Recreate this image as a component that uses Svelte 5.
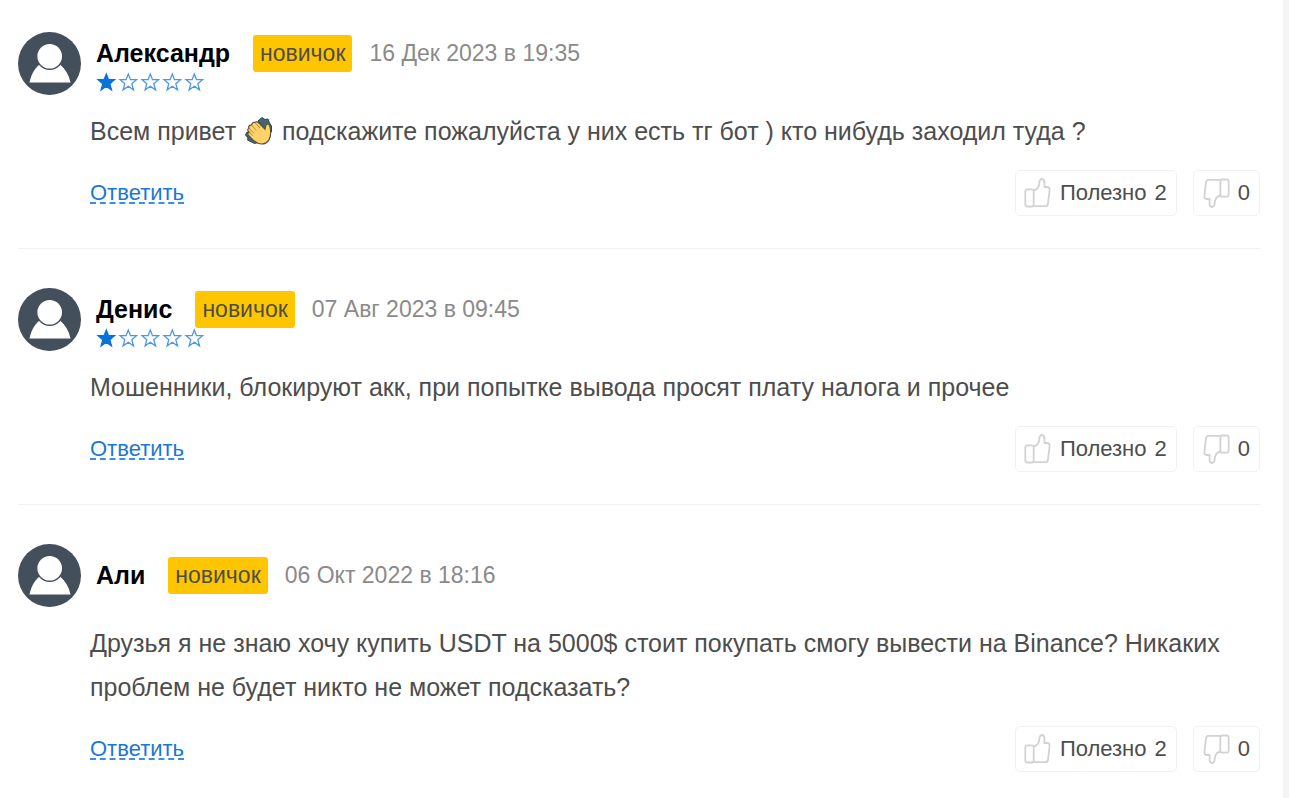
<script>
  const reviews = [
    { id: 1, name: 'Александр', date: '16 Дек 2023 в 19:35', rating: 1, before: 'Всем привет ', clap: true, text: ' подскажите пожалуйста у них есть тг бот ) кто нибудь заходил туда ?', up: 2, down: 0 },
    { id: 2, name: 'Денис', date: '07 Авг 2023 в 09:45', rating: 1, before: '', clap: false, text: 'Мошенники, блокируют акк, при попытке вывода просят плату налога и прочее', up: 2, down: 0 },
    { id: 3, name: 'Али', date: '06 Окт 2022 в 18:16', rating: 0, before: '', clap: false, text: 'Друзья я не знаю хочу купить USDT на 5000$ стоит покупать смогу вывести на Binance? Никаких проблем не будет никто не может подсказать?', up: 2, down: 0 }
  ];
  const stars = [1, 2, 3, 4, 5];
</script>

{#snippet thumb(down)}
  <svg class="thumb" class:down viewBox="0 0 28 30" aria-hidden="true">
    <path d="M3.300 11.300h4.400a2 2 0 0 1 2 2v13.200a2 2 0 0 1-2 2H3.300a2 2 0 0 1-2-2V13.300a2 2 0 0 1 2-2z" />
    <path d="M9.700 12.300c2.300-.3 4.200-2 5-4.300.6-1.800.5-3 .9-4.800.4-1.600 1.400-2.300 2.500-2.200 1.500.2 2.300 1.500 2.300 3.200v4.800h2.600c1.900 0 2.800 1.300 2.600 3l-1.600 13.600c-.2 1.700-1.100 2.600-2.600 2.600H8.500" />
  </svg>
{/snippet}

<main>
  {#each reviews as r (r.id)}
    <article>
      <header>
        <svg class="avatar" viewBox="0 0 63 63" aria-hidden="true">
          <circle cx="31.500" cy="31.500" r="31.500" fill="#444f5c" />
          <path d="M11.500 50.500C13 43 16 37 21.500 32.500h20.500C47.500 37 51 43 52.500 50.500z" fill="#fff" />
          <circle cx="31.700" cy="24.200" r="13" fill="#fff" stroke="#444f5c" stroke-width="1.400" />
        </svg>
        <div class="who">
          <div class="line">
            <strong>{r.name}</strong>
            <span class="badge">новичок</span>
            <time>{r.date}</time>
          </div>
          {#if r.rating}
            <div class="stars" role="img" aria-label="{r.rating} / 5">
              {#each stars as s}
                <svg class:full={s <= r.rating} viewBox="0 0 22 20" aria-hidden="true">
                  <path d="M10.300 2l2.200 5.700h6l-4.700 4 1.700 6.200-5.200-3.600-5.200 3.600 1.700-6.200-4.700-4h6z" />
                </svg>
              {/each}
            </div>
          {/if}
        </div>
      </header>
      <div class="content">
        <p>{r.before}{#if r.clap}<svg class="clap" viewBox="0 0 28 28" role="img" aria-label="👏"><path d="M13 4l4-3.500 3 2 3-.5 1.500 4 2 3v6l-5-2z" fill="#3f6875" stroke="#35434a" /><path d="M2 15l-1.500 3 2.500 3-.5 2 4 2 3 1.500 4-1-6-7z" fill="#3f6875" stroke="#35434a" /><path d="M10 5.500c1.500-1.500 3-.5 4 .7l6 6c.6-3 .5-5 2.500-5.200 2.400-.2 2.600 3 3 6 .8 7-1.500 14-9 14-4 0-7-2.500-9.500-5L3.500 18.500c-1.300-1.500-.4-3 .7-3.200C2 13.500 2.500 12 4 11.300 3 9.500 4.500 7.500 6.500 8.300 7 6 8.500 5 10 5.500z" fill="#ffd36a" stroke="#57513d" stroke-width="1.200" /><path d="M6.500 8.300l5 5M4 11.300l5 5M4.200 15.300l3.500 3.500M10 5.500l5 5.500" fill="none" stroke="#b98a3c" stroke-width="1" /></svg>{/if}{r.text}</p>
        <footer>
          <a href="#reply-{r.id}">Ответить</a>
          <div class="votes">
            <button type="button">{@render thumb(false)}<span>Полезно</span><span>{r.up}</span></button>
            <button type="button" aria-label="Не полезно {r.down}">{@render thumb(true)}<span>{r.down}</span></button>
          </div>
        </footer>
      </div>
    </article>
  {/each}
</main>

<style>
  :global(body) {
    margin: 0;
    background: #fff;
  }
  main {
    box-sizing: border-box;
    min-height: 100vh;
    padding: 32px 23px 26px 18px;
    border-right: 6px solid #f4f4f4;
    font-family: "Liberation Sans", Arial, sans-serif;
    color: #4d4d4d;
  }
  article + article {
    margin-top: 32px;
    padding-top: 39px;
    border-top: 1px solid #f0f0f0;
  }
  header {
    display: flex;
    gap: 15px;
    height: 63px;
  }
  .avatar {
    width: 63px;
    height: 63px;
    flex: none;
  }
  .who {
    display: flex;
    flex-direction: column;
    justify-content: center;
  }
  .line {
    display: flex;
    align-items: center;
    line-height: 37px;
  }
  strong {
    margin-right: 23px;
    font-size: 25px;
    color: #000;
  }
  .badge {
    margin-right: 17px;
    padding: 0 7px;
    border-radius: 3px;
    background: #ffc600;
    font-size: 23px;
  }
  time {
    font-size: 23px;
    color: #8a8a8a;
  }
  .stars {
    display: flex;
    height: 20px;
  }
  .stars svg {
    width: 22px;
    height: 20px;
  }
  .stars path {
    fill: none;
    stroke: #4a98e6;
    stroke-width: 1.3;
  }
  .stars .full path {
    fill: #0873df;
    stroke: #0873df;
  }
  .content {
    padding: 14px 0 0 72px;
  }
  p {
    margin: 0;
    font-size: 25px;
    line-height: 44px;
  }
  .clap {
    width: 28px;
    height: 28px;
    margin: 0 2px;
    vertical-align: -5px;
  }
  footer {
    display: flex;
    justify-content: space-between;
    align-items: center;
    margin-top: 17px;
  }
  a {
    margin-top: 2px;
    font-size: 22px;
    line-height: 18px;
    color: #1a77d8;
    text-decoration: none;
    border-bottom: 2px dashed #3d8ee0;
  }
  .votes {
    display: flex;
    gap: 16px;
  }
  button {
    display: flex;
    align-items: center;
    gap: 8px;
    height: 46px;
    padding: 0 9px 0 8px;
    border: 1px solid #f1f1f1;
    border-radius: 5px;
    background: #fff;
    font: 22px "Liberation Sans", Arial, sans-serif;
    color: #4d4d4d;
  }
  .thumb {
    width: 28px;
    height: 30px;
    fill: none;
    stroke: #d2d2d2;
    stroke-width: 1.8;
    stroke-linejoin: round;
  }
  .down {
    transform: rotate(180deg);
  }
</style>
